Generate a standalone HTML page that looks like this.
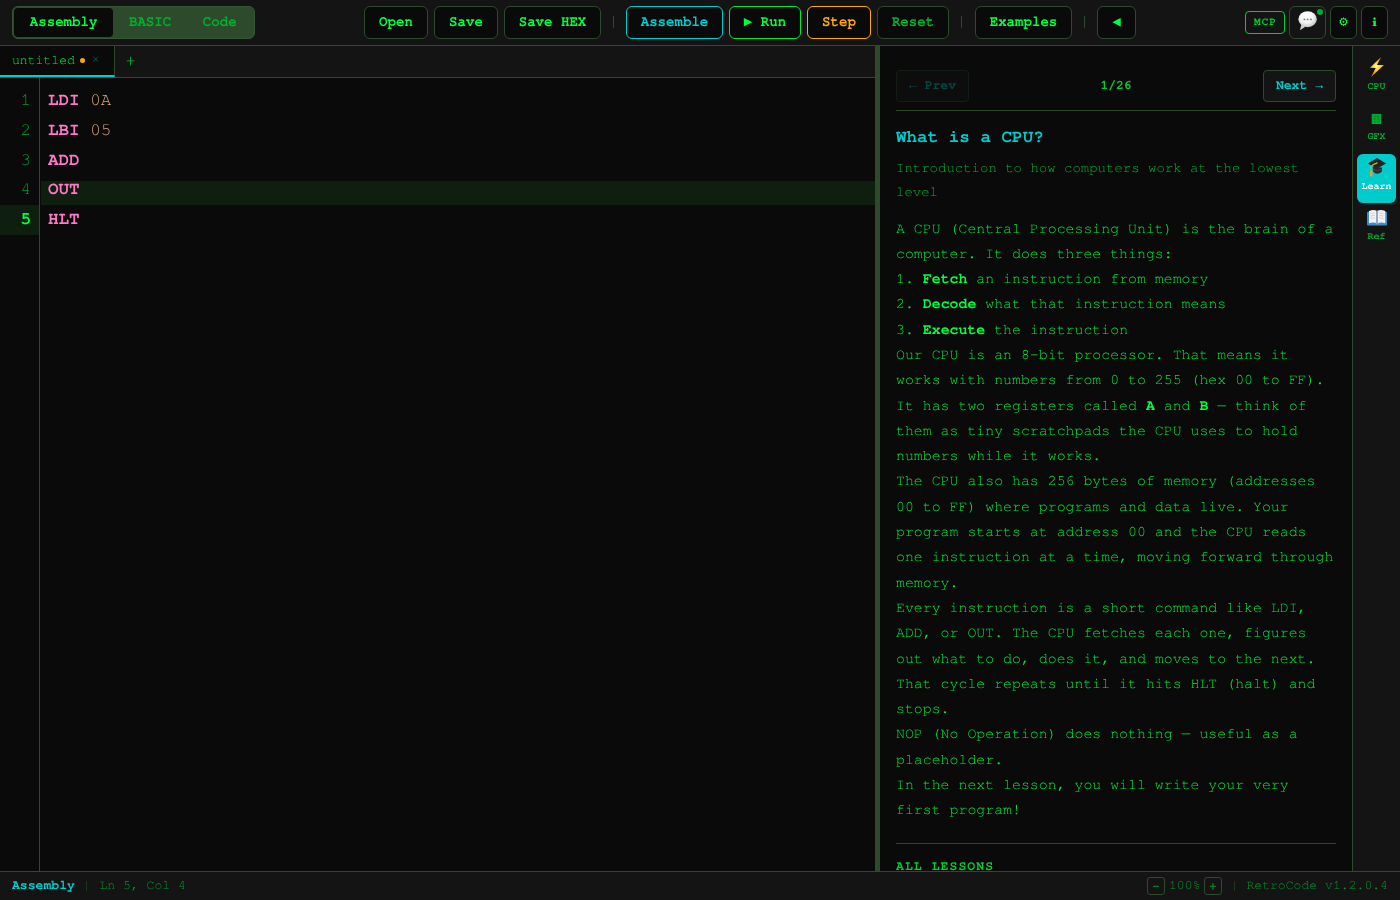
<!DOCTYPE html>
<html lang="en">
<head>
<meta charset="utf-8">
<title>RetroCode</title>
<style>
*{box-sizing:border-box;margin:0;padding:0}
html,body{width:1400px;height:900px;overflow:hidden;background:#0a0a0a}
body{position:relative;text-rendering:geometricPrecision;font-family:"FreeMono","Liberation Mono",monospace;font-size:14px;color:#00cc33;line-height:1.7}
#app{position:absolute;left:0;top:0;width:1400px;height:900px;overflow:hidden;background:#0a0a0a;will-change:transform}
.abs{position:absolute}
/* toolbar */
#toolbar{position:absolute;left:0;top:0;width:1400px;height:46px;background:#141414;border-bottom:1px solid #2d4a2d}
#modes{position:absolute;left:12px;top:6px;height:33px;width:243px;background:#2d4a2d;border:1px solid #345634;border-radius:6px;padding:1px;display:flex}
#modes>span{display:block;height:29px;line-height:29px;padding:0 15.8px;font-size:14.08px;font-weight:bold;color:#00b030;border-radius:4px;white-space:pre}
#modes>span.on{background:#0a0a0a;color:#00ff41;font-weight:bold}
.btn{position:absolute;top:6px;height:33px;line-height:31px;border:1px solid #2d4a2d;border-radius:6px;background:#0a0a0a;color:#00ff41;font-weight:bold;font-size:14.08px;text-align:center;white-space:pre}
.t{display:inline-block;transform:scaleY(1.08);transform-origin:50% 66%}
.sym{font-family:"DejaVu Sans Mono","Liberation Mono",monospace;display:inline-block;transform:scaleY(0.93)}
.arr{font-family:"Liberation Mono","DejaVu Sans Mono",monospace;font-weight:normal}
.sep{position:absolute;top:16px;width:1px;height:12px;background:#2d4a2d}
/* tab bar */
#tabbar{position:absolute;left:0;top:46px;width:875px;height:32px;background:#141414;border-bottom:1px solid #2d4a2d}
#tab{position:absolute;left:0;top:0;width:115px;height:31px;background:#0a0a0a;border-right:1px solid #2d4a2d;border-bottom:2px solid #00cccc;font-size:13.12px;line-height:29px;white-space:pre}
/* editor */
#gutter{position:absolute;left:0;top:78px;width:40px;height:793px;border-right:1px solid #2d4a2d;background:#0a0a0a}
#lns{position:absolute;left:0;top:7.7px;width:39px;font-size:17.6px;line-height:29.92px;color:#009a2c;text-align:right}
#lns div{height:29.92px;padding-right:8px;overflow:hidden}
#lns .act{background:#0f1f0f;color:#00ff41;font-weight:bold}
#code{position:absolute;left:48px;top:85.7px;font-size:17.6px;line-height:29.92px;white-space:pre;color:#e2aa74}
#code div{height:29.92px}
#code b{color:#ff79c6}
#body b{color:#00ff41}
#split{position:absolute;left:875px;top:46px;width:5px;height:825px;background:#2d4a2d}
/* lesson panel */
#panel{position:absolute;left:880px;top:46px;width:472px;height:825px;overflow:hidden;background:#0a0a0a}
.nav{position:absolute;top:24px;height:32px;line-height:30px;width:73px;border:1px solid #2d4a2d;border-radius:4px;background:#141414;color:#00cccc;font-weight:bold;font-size:13.12px;text-align:center;white-space:pre}
.hr{position:absolute;left:16px;width:440px;height:1px;background:#2d4a2d}
/* icon bar */
#icons{position:absolute;left:1352px;top:46px;width:48px;height:825px;background:#141414;border-left:1px solid #2d4a2d}
.ib{position:absolute;left:4px;width:39px;height:49px;border-radius:6px;text-align:center}
.ib .ic{position:absolute;left:5px}
.ib .l{position:absolute;left:0;width:39px;top:25px;font-size:10px;line-height:14px;font-weight:bold;color:#00aa33}
/* status */
#status{position:absolute;left:0;top:871px;width:1400px;height:29px;background:#141414;border-top:1px solid #2d4a2d;font-size:13.12px;line-height:28px;white-space:pre}
.zb{position:absolute;top:5px;width:18px;height:18px;border:1px solid #2d4a2d;border-radius:3px;line-height:17.4px;text-align:center;color:#009929;font-size:13.12px;-webkit-text-stroke:0.35px #009929}
</style>
</head>
<body>
<div id="app">
<div id="toolbar">
  <div id="modes"><span class="on"><span class="t">Assembly</span></span><span><span class="t">BASIC</span></span><span><span class="t">Code</span></span></div>
  <div class="btn" style="left:364px;width:64px"><span class="t">Open</span></div>
  <div class="btn" style="left:434px;width:64px"><span class="t">Save</span></div>
  <div class="btn" style="left:504px;width:97px"><span class="t">Save HEX</span></div>
  <div class="sep" style="left:613px"></div>
  <div class="btn" style="left:626px;width:97px;border-color:#00cccc;color:#00cccc"><span class="t">Assemble</span></div>
  <div class="btn" style="left:729px;width:72px;border-color:#00e63a"><span class="t"><span class="sym">&#9654;</span> Run</span></div>
  <div class="btn" style="left:807px;width:64px;border-color:#ffaa00;color:#ffaa00"><span class="t">Step</span></div>
  <div class="btn" style="left:877px;width:72px;color:#00b030"><span class="t">Reset</span></div>
  <div class="sep" style="left:961px"></div>
  <div class="btn" style="left:975px;width:97px"><span class="t">Examples</span></div>
  <div class="sep" style="left:1084px"></div>
  <div class="btn" style="left:1097px;width:39px"><span class="t"><span class="sym">&#9664;</span></span></div>
  <div class="btn" style="left:1245px;top:11px;width:40px;height:23px;line-height:21px;font-size:11px;letter-spacing:1px;border-color:#00cc33;color:#00cc33;background:transparent;border-radius:4px;padding-left:1px">MCP</div>
  <div class="btn" style="left:1289px;width:37px;background:#141414"><svg style="position:absolute;left:0;top:-3px" width="36" height="36" viewBox="0 0 36 36" aria-hidden="true"><defs><radialGradient id="gc" cx="16.5" cy="12.5" r="11" gradientUnits="userSpaceOnUse"><stop offset="0" stop-color="#ffffff"/><stop offset="0.6" stop-color="#f4f4f4"/><stop offset="1" stop-color="#c4c4c4"/></radialGradient></defs><polygon points="11.4,20.6 9.9,26.2 15.8,22.6" fill="#cfcfcf"/><ellipse cx="17.6" cy="15.2" rx="9.2" ry="8" fill="url(#gc)"/><circle cx="14.4" cy="15.4" r="0.95" fill="#7d7d7d"/><circle cx="17.6" cy="15.4" r="0.95" fill="#7d7d7d"/><circle cx="20.9" cy="15.4" r="0.95" fill="#7d7d7d"/></svg></div>
  <div class="abs" style="left:1317px;top:9px;width:6px;height:6px;border-radius:50%;background:#00aa33"></div>
  <div class="btn" style="left:1330px;width:27px">&#9881;</div>
  <div class="btn" style="left:1361px;width:27px"><span style="font-family:'FreeSerif','FreeMono','Liberation Serif',serif;font-size:12.5px;position:relative;top:-0.5px">&#8505;</span></div>
</div>

<div id="tabbar">
  <div id="tab"><span class="abs" style="left:12px;top:0;color:#00f03e">untitled</span><span class="abs" style="left:79.6px;top:11.6px;width:5.1px;height:5.1px;border-radius:50%;background:#ffaa00"></span><span class="abs" style="left:91.5px;top:-1px;color:#1a6630;font-size:14px">&#215;</span></div>
  <span class="abs" style="left:125.2px;top:0;font-size:18px;line-height:30px;color:#00b836;-webkit-text-stroke:0.12px #00b836">+</span>
</div>

<div id="gutter">
  <div id="lns"><div>1</div><div>2</div><div>3</div><div>4</div><div class="act">5</div></div>
</div>
<div class="abs" style="left:41px;top:181px;width:834px;height:24px;background:#0f1f0f"></div>
<div id="code"><div><b>LDI</b> 0A</div><div><b>LBI</b> 05</div><div><b>ADD</b></div><div><b>OUT</b></div><div><b>HLT</b></div></div>

<div id="split"></div>

<div id="panel">
  <div class="nav" style="left:16px;opacity:.3"><span class="arr">&#8592;</span> Prev</div>
  <div class="abs" style="left:16px;width:440px;top:24px;height:32px;line-height:32px;text-align:center;font-size:13px;font-weight:bold;color:#00cc33">1/26</div>
  <div class="nav" style="left:383px">Next <span class="arr">&#8594;</span></div>
  <div class="hr" style="top:64px"></div>
  <div class="abs" id="ttl" style="left:16px;top:77px;font-size:17.6px;line-height:29.92px;font-weight:bold;color:#00cccc;white-space:pre">What is a CPU?</div>
  <div class="abs" id="sub" style="left:16px;top:111px;font-size:14px;line-height:23.8px;color:#00b52f;white-space:pre">Introduction to how computers work at the lowest
level</div>
  <div class="abs" id="body" style="left:16px;top:169.5px;font-size:14.88px;line-height:25.296px;color:#00e63a;white-space:pre">A CPU (Central Processing Unit) is the brain of a
computer. It does three things:
1. <b>Fetch</b> an instruction from memory
2. <b>Decode</b> what that instruction means
3. <b>Execute</b> the instruction
Our CPU is an 8-bit processor. That means it
works with numbers from 0 to 255 (hex 00 to FF).
It has two registers called <b>A</b> and <b>B</b> &#8212; think of
them as tiny scratchpads the CPU uses to hold
numbers while it works.
The CPU also has 256 bytes of memory (addresses
00 to FF) where programs and data live. Your
program starts at address 00 and the CPU reads
one instruction at a time, moving forward through
memory.
Every instruction is a short command like LDI,
ADD, or OUT. The CPU fetches each one, figures
out what to do, does it, and moves to the next.
That cycle repeats until it hits HLT (halt) and
stops.
NOP (No Operation) does nothing &#8212; useful as a
placeholder.
In the next lesson, you will write your very
first program!</div>
  <div class="hr" style="top:797px"></div>
  <div class="abs" id="all" style="left:16px;top:810px;font-size:13.12px;line-height:22px;font-weight:bold;letter-spacing:1.05px;color:#00cc33;white-space:pre">ALL LESSONS</div>
</div>

<div id="icons">
  <div class="ib" style="top:8px">
    <svg class="ic" style="top:-2px" width="30" height="30" viewBox="0 0 30 30" aria-hidden="true">
      <defs><radialGradient id="gb" cx="14.4" cy="14.2" r="9" gradientUnits="userSpaceOnUse"><stop offset="0" stop-color="#fffbd6"/><stop offset="0.3" stop-color="#ffe03a"/><stop offset="0.65" stop-color="#ffb300"/><stop offset="1" stop-color="#f08000"/></radialGradient></defs>
      <polygon points="19.1,4.9 14.9,13 22,13 9.1,24.9 13.7,16 8,15.8" fill="url(#gb)"/>
    </svg>
    <span class="l">CPU</span></div>
  <div class="ib" style="top:58px">
    <svg class="ic" style="top:0px" width="30" height="30" viewBox="0 0 30 30" aria-hidden="true">
      <rect x="9.7" y="9.9" width="9.5" height="10.1" fill="#00b035"/>
      <g stroke="#007a25" stroke-width="0.7" opacity="0.8"><path d="M12.9 10.4V19.5M16 10.4V19.5M10.2 12.2H18.7M10.2 14.9H18.7M10.2 17.6H18.7"/></g>
    </svg>
    <span class="l">GFX</span></div>
  <div class="ib" style="top:108px;background:#00cccc">
    <svg class="ic" style="top:-1px" width="30" height="30" viewBox="0 0 30 30" aria-hidden="true">
      <path d="M10.9 14V18.2Q15 23.4 19.9 18.4V14.4Z" fill="#2a2a2c"/>
      <path d="M11.4 16.4Q15 19.4 19.6 16.6" stroke="#48484a" stroke-width="1" fill="none"/>
      <polygon points="15,4.9 24.1,10.6 15,15.6 5.7,10.6" fill="#222224"/>
      <circle cx="15" cy="9.8" r="1" fill="#555558"/>
      <path d="M14.6 10.2Q10.2 11.2 9.2 14.2L9 18.4" stroke="#e8971f" stroke-width="1.4" fill="none" stroke-linecap="round"/>
      <rect x="7.9" y="17.8" width="2.5" height="5.8" rx="1.1" fill="#ff9a1a"/>
    </svg>
    <span class="l" style="color:#fff">Learn</span></div>
  <div class="ib" style="top:158px">
    <svg class="ic" style="top:-1px" width="30" height="30" viewBox="0 0 30 30" aria-hidden="true">
      <rect x="5" y="8.7" width="20" height="13.7" rx="0.8" fill="#3a8ec6"/>
      <path d="M7 8Q11 6.4 14.4 7.6V20.1Q11 19 7 20.2Z" fill="#f1f1f6"/>
      <path d="M15.8 7.6Q19.2 6.4 23.3 8V20.2Q19.2 19 15.8 20.1Z" fill="#f1f1f6"/>
      <rect x="14.3" y="7.6" width="1.6" height="12.8" fill="#a3a3ab"/>
      <path d="M8.6 10.5L12.8 9.8M8.6 13L12.8 12.3M8.6 15.5L12.8 14.8M17.3 9.8L21.6 10.5M17.3 12.3L21.6 13M17.3 14.8L21.6 15.5" stroke="#c9c9d2" stroke-width="0.8"/>
      <rect x="13.8" y="20.2" width="2.6" height="1" fill="#d9a520"/>
    </svg>
    <span class="l">Ref</span></div>
</div>

<div id="status">
  <span class="abs" style="left:12px;top:0;color:#00cccc;font-weight:bold">Assembly</span>
  <span class="abs" style="left:86px;top:9px;width:1px;height:10px;background:#17381b"></span>
  <span class="abs" style="left:99.4px;top:0;color:#009929">Ln 5, Col 4</span>
  <span class="zb" style="left:1147px">&#8722;</span>
  <span class="abs" style="left:1169px;top:0;color:#009929">100%</span>
  <span class="zb" style="left:1204px">+</span>
  <span class="abs" style="left:1234px;top:9px;width:1px;height:10px;background:#17381b"></span>
  <span class="abs" style="right:12px;top:0;color:#009929">RetroCode v1.2.0.4</span>
</div>
</div>
</body>
</html>
